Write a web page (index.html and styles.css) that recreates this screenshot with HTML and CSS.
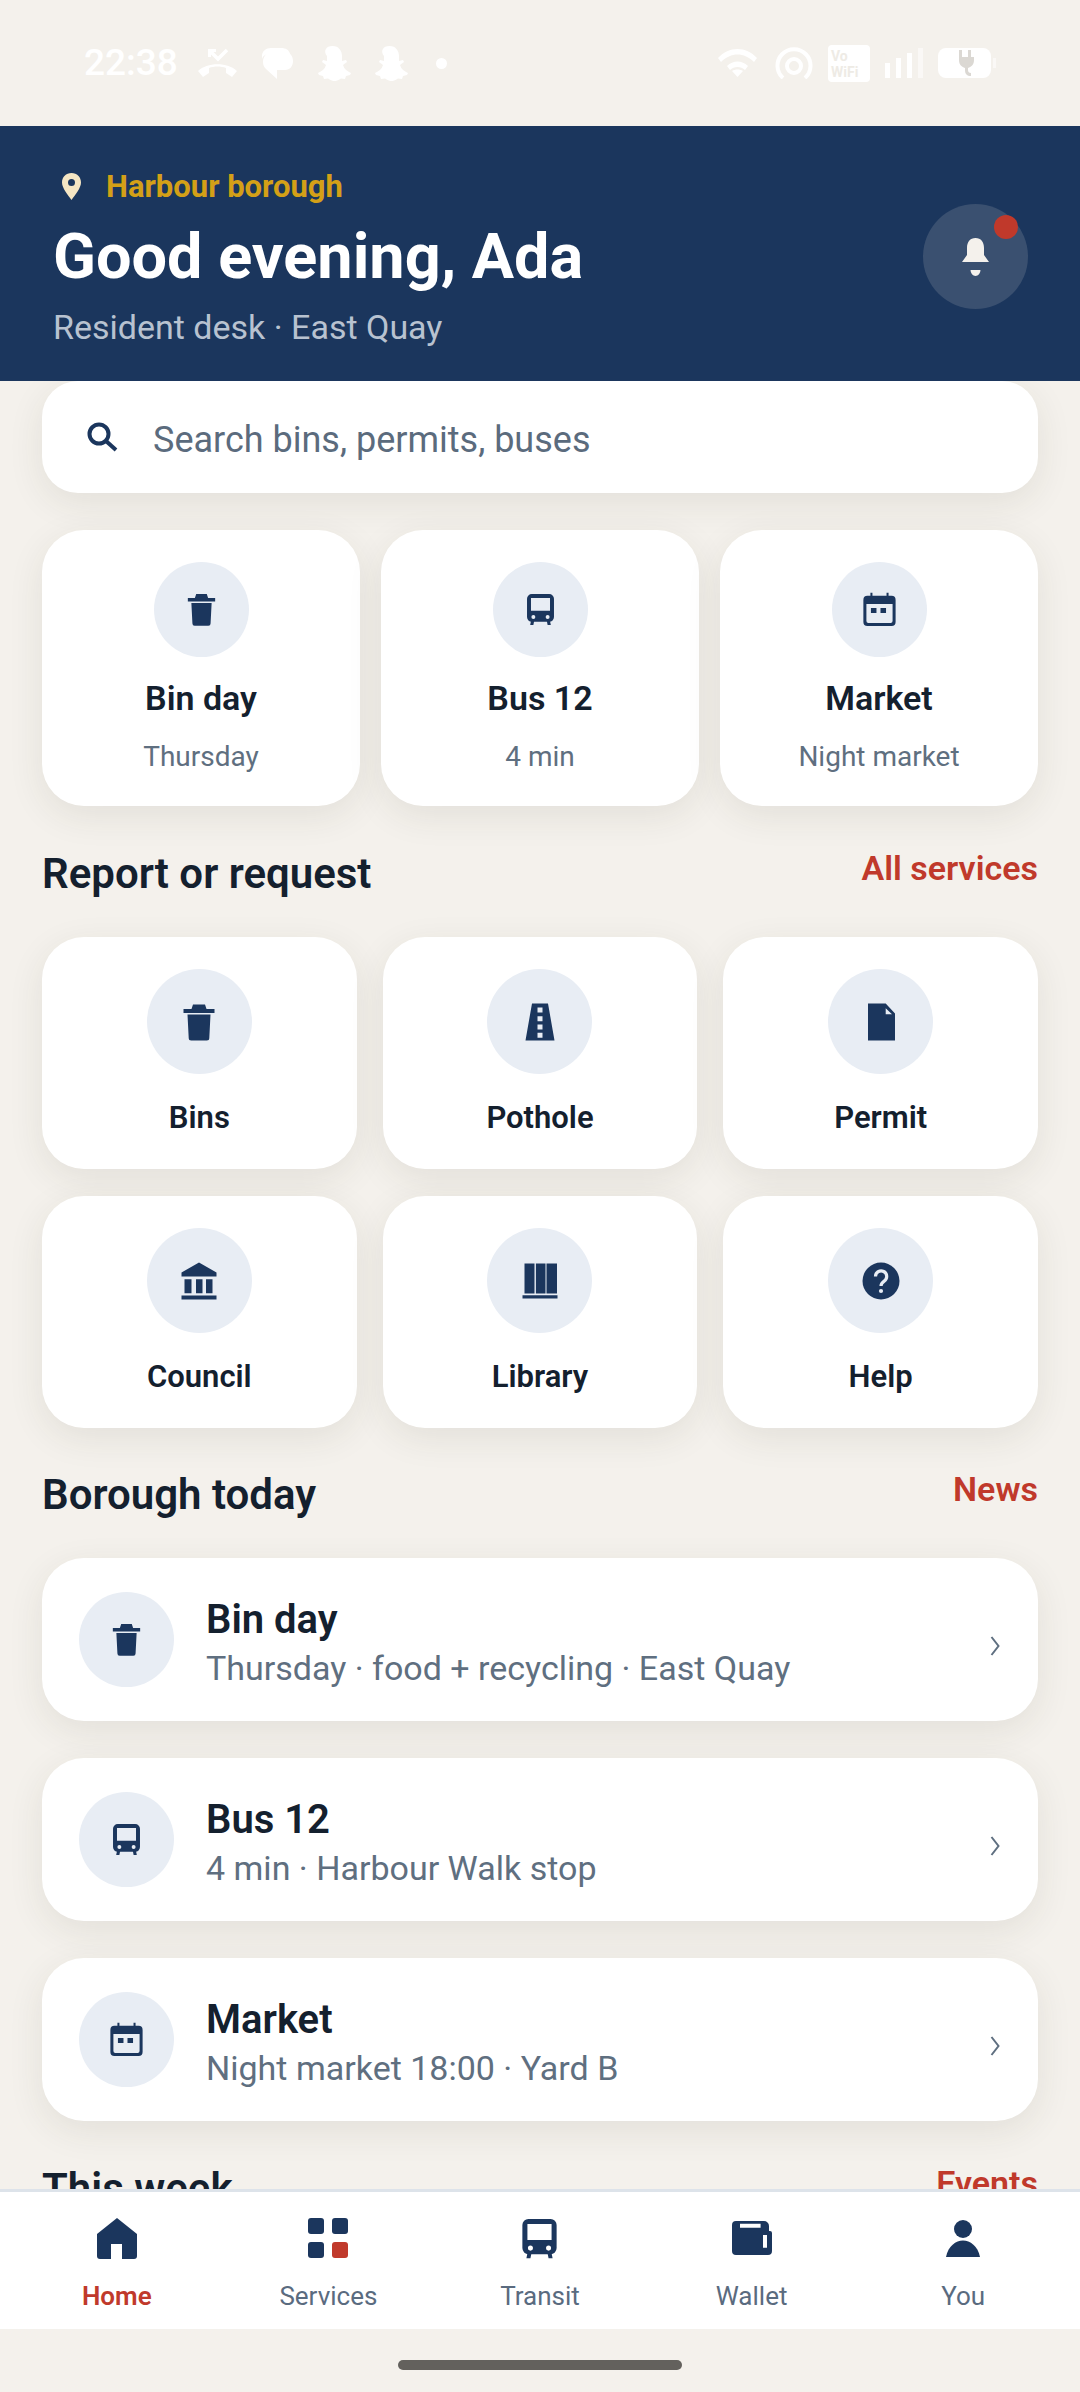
FILE: index.html
```html
<!DOCTYPE html>
<html lang="en">
<head>
  <meta charset="UTF-8" />
  <meta name="viewport" content="width=device-width, initial-scale=1.0"/>
  <title>Harbour borough</title>
  <link rel="stylesheet" href="styles.css">
</head>
<body>

<svg class="defs" aria-hidden="true">
  <defs>
    <g id="bin">
      <path d="M15 3.5h12l1.5 4.5h8v4h-31v-4h8z"/>
      <path d="M9.5 13.5h23l-1.2 23.5a2.5 2.5 0 0 1-2.5 2.5H13.2a2.5 2.5 0 0 1-2.5-2.5z"/>
    </g>
    <g id="bus" transform="translate(5.7 3.5) scale(.9)">
      <path fill-rule="evenodd" d="M6 0h22a6 6 0 0 1 6 6v23a6 6 0 0 1-6 6H6a6 6 0 0 1-6-6V6a6 6 0 0 1 6-6zM5 5v16h24V5zM8 26.5a2.5 2.5 0 1 0 0 5 2.5 2.5 0 0 0 0-5zM26 26.5a2.5 2.5 0 1 0 0 5 2.5 2.5 0 0 0 0-5z"/>
      <path d="M5 34h4l-1 5H4zM25 34h4l1 5h-4z"/>
    </g>
    <g id="calendar" transform="translate(2.7 2.1) scale(1.143)">
      <path fill-rule="evenodd" d="M7 0h2v3h14V0h2v3h3a4 4 0 0 1 4 4v22a4 4 0 0 1-4 4H4a4 4 0 0 1-4-4V7a4 4 0 0 1 4-4h3zM3 11v17a2 2 0 0 0 2 2h22a2 2 0 0 0 2-2V11zM7.5 15h5.5v5H7.5zM17 15h5.5v5H17z"/>
    </g>
    <path id="road" fill-rule="evenodd" transform="translate(6.5 2.5)" d="M6.5 0h16L29 37H0zM12 4v5h5V4zM12 12.700v5h5v-5zM12 21v5h5v-5zM12 29.300v5h5v-5z"/>
    <path id="doc" fill-rule="evenodd" transform="translate(8 2.500)" d="M0 0h17.700L27 10v27H0zM17.700 4.700v6h6.300z"/>
    <path id="bank" transform="translate(3.500 2.500)" d="M17.500 0L35 10v4H0v-4zM3 16.700h7v14H3zM14.500 16.700h6.500v14h-6.500zM24.500 16.700h6.500v14h-6.500zM0 33h35v4H0z"/>
    <path id="books" transform="translate(3.500 3.500)" d="M2 0h10v30H2zM13.400 0H23v30h-9.600zM24 0h10.500v30H24zM0 31.700h35V35H0z"/>
    <g id="help">
      <circle cx="21" cy="21" r="18.500"/>
      <path d="M15.500 16.500a5.600 5.600 0 1 1 8.700 4.600c-2 1.400-3.200 2.400-3.200 4.900" fill="none" stroke="#e8edf4" stroke-width="3.200"/>
      <circle cx="21" cy="31" r="2.100" fill="#e8edf4"/>
    </g>
    <path id="ghost" d="M18.500 0C25 0 28 5 28 10v5l4-1 1 2-4 3c1 4 4 6 8 8l-1 2-4 1-1 3-4-.5c-3 2-5 2.500-6.500 2.500s-3.500-.5-6.500-2.500l-4 .5-1-3-4-1-1-2c4-2 7-4 8-8l-4-3 1-2 4 1v-5C9 5 12 0 18.500 0z"/>
  </defs>
</svg>

<div class="phone">

  <div class="statusbar">
    <div class="status-left">
      <span class="time">22:38</span>
      <svg class="st" width="39" height="30" viewBox="0 0 39 30">
        <path d="M0 23c9-9 30-9 39 0l-5 6-6-4v-5c-5-2-12-2-17 0v5l-6 4z"/>
        <path d="M12 3l8 8 9-9" fill="none" stroke="#fff" stroke-width="3.500"/>
        <path d="M10 1h8v3h-5v5h-3z"/>
      </svg>
      <svg class="st ml3" width="34" height="31" viewBox="0 0 34 31">
        <path d="M2 8c0-5 4-8 9-8h10c5 0 8 2 9 6H10C6 6 2 8 2 12z"/>
        <path d="M13 4h12c5 0 8 4 8 9s-3 9-8 9h-8v9L6 21c-2-2-3-4-3-7 0-6 4-10 10-10z"/>
      </svg>
      <svg class="st" width="37" height="35" viewBox="0 0 37 35"><use href="#ghost"/></svg>
      <svg class="st" width="37" height="35" viewBox="0 0 37 35"><use href="#ghost"/></svg>
      <span class="st-dot"></span>
    </div>
    <div class="status-right">
      <svg class="st" width="39" height="28" viewBox="0 0 39 28">
        <path d="M0 9c11-12 28-12 39 0l-3 4C26 3 13 3 3 13z"/>
        <path d="M9 17c6-6 15-6 21 0l-3 4c-4-4-11-4-15 0z"/>
        <path d="M14 22c3-2 8-2 11 0l-5.500 6z"/>
      </svg>
      <svg class="st ml3" width="38" height="32" viewBox="0 0 38 32">
        <path d="M8 31A16.500 16.500 0 1 1 30 31" fill="none" stroke="#fff" stroke-width="4"/>
        <circle cx="19" cy="19" r="7" fill="none" stroke="#fff" stroke-width="4"/>
      </svg>
      <span class="vowifi">Vo<br>WiFi</span>
      <span class="signal">
        <i class="b1"></i><i class="b2"></i><i class="b3"></i><i class="b4"></i>
      </span>
      <span class="battery">
        <svg width="18" height="26" viewBox="0 0 18 26"><path fill="#dbd8d3" d="M3 0h3v7h6V0h3v7h3v3c0 5-3 7-6 8v2c0 2 1 3 3 3v3c-4 0-6-2-6-6v-2c-3-1-6-3-6-8V7h0z"/></svg>
      </span>
      <span class="battery-cap"></span>
    </div>
  </div>

  <header class="top">
    <div class="top-text">
      <div class="kicker">
        <svg width="19" height="27" viewBox="0 0 19 27"><path fill-rule="evenodd" fill="#f5e6c4" d="M9.500 0C15 0 19 4 19 9.500 19 15 13 22 9.500 27 6 22 0 15 0 9.500 0 4 4 0 9.500 0zM9.500 6a3.500 3.500 0 1 0 0 7 3.500 3.500 0 0 0 0-7z"/></svg>
        <span>Harbour borough</span>
      </div>
      <h1>Good evening, Ada</h1>
      <p>Resident desk · East Quay</p>
    </div>
    <div class="bell">
      <svg width="27" height="38" viewBox="0 0 27 38"><path d="M13.500 0C19 0 22 4 22 10v7l5 7H0l5-7v-7C5 4 8 0 13.500 0zM8.500 32h10a5 6 0 0 1-10 0z"/></svg>
      <span class="bell-dot"></span>
    </div>
  </header>

  <main class="content">

    <div class="search">
      <svg width="32" height="30" viewBox="0 0 32 30"><circle cx="12" cy="12" r="9.500" fill="none" stroke="#1b365d" stroke-width="4"/><path d="M19 19l10 9" stroke="#1b365d" stroke-width="4"/></svg>
      <span>Search bins, permits, buses</span>
    </div>

    <div class="quick">
      <div class="quick-card">
        <div class="circle small"><svg viewBox="0 0 42 42"><use href="#bin"/></svg></div>
        <b>Bin day</b>
        <span>Thursday</span>
      </div>
      <div class="quick-card">
        <div class="circle small"><svg viewBox="0 0 42 42"><use href="#bus"/></svg></div>
        <b>Bus 12</b>
        <span>4 min</span>
      </div>
      <div class="quick-card">
        <div class="circle small"><svg viewBox="0 0 42 42"><use href="#calendar"/></svg></div>
        <b>Market</b>
        <span>Night market</span>
      </div>
    </div>

    <div class="section-head">
      <h2>Report or request</h2>
      <a>All services</a>
    </div>

    <div class="services">
      <div class="tile"><div class="circle"><svg viewBox="0 0 42 42"><use href="#bin"/></svg></div><b>Bins</b></div>
      <div class="tile"><div class="circle"><svg viewBox="0 0 42 42"><use href="#road"/></svg></div><b>Pothole</b></div>
      <div class="tile"><div class="circle"><svg viewBox="0 0 42 42"><use href="#doc"/></svg></div><b>Permit</b></div>
      <div class="tile"><div class="circle"><svg viewBox="0 0 42 42"><use href="#bank"/></svg></div><b>Council</b></div>
      <div class="tile"><div class="circle"><svg viewBox="0 0 42 42"><use href="#books"/></svg></div><b>Library</b></div>
      <div class="tile"><div class="circle"><svg viewBox="0 0 42 42"><use href="#help"/></svg></div><b>Help</b></div>
    </div>

    <div class="section-head">
      <h2>Borough today</h2>
      <a>News</a>
    </div>

    <div class="list">
      <div class="row">
        <div class="circle small"><svg viewBox="0 0 42 42"><use href="#bin"/></svg></div>
        <div class="row-text"><b>Bin day</b><span>Thursday · food + recycling · East Quay</span></div>
        <svg class="chev" width="10" height="20" viewBox="0 0 10 20"><path d="M1.500 1l7 9-7 9" fill="none" stroke="#5f6f80" stroke-width="2"/></svg>
      </div>
      <div class="row">
        <div class="circle small"><svg viewBox="0 0 42 42"><use href="#bus"/></svg></div>
        <div class="row-text"><b>Bus 12</b><span>4 min · Harbour Walk stop</span></div>
        <svg class="chev" width="10" height="20" viewBox="0 0 10 20"><path d="M1.500 1l7 9-7 9" fill="none" stroke="#5f6f80" stroke-width="2"/></svg>
      </div>
      <div class="row">
        <div class="circle small"><svg viewBox="0 0 42 42"><use href="#calendar"/></svg></div>
        <div class="row-text"><b>Market</b><span>Night market 18:00 · Yard B</span></div>
        <svg class="chev" width="10" height="20" viewBox="0 0 10 20"><path d="M1.500 1l7 9-7 9" fill="none" stroke="#5f6f80" stroke-width="2"/></svg>
      </div>
    </div>

    <div class="section-head">
      <h2>This week</h2>
      <a>Events</a>
    </div>

  </main>

  <nav class="tabs">
    <div class="tab active">
      <div class="tab-icon"><svg width="40" height="41" viewBox="0 0 40 41"><path fill-rule="evenodd" d="M20 0l20 16v22a3 3 0 0 1-3 3H3a3 3 0 0 1-3-3V16zM14 26v15h11V26z"/></svg></div>
      <span>Home</span>
    </div>
    <div class="tab">
      <div class="tab-icon"><svg width="40" height="40" viewBox="0 0 40 40"><rect width="16" height="16" rx="3"/><rect x="24" width="16" height="16" rx="3"/><rect y="24" width="16" height="16" rx="3"/><rect x="24" y="24" width="16" height="16" rx="3" fill="#c0392b"/></svg></div>
      <span>Services</span>
    </div>
    <div class="tab">
      <div class="tab-icon"><svg width="47" height="47" viewBox="0 0 42 42"><use href="#bus"/></svg></div>
      <span>Transit</span>
    </div>
    <div class="tab">
      <div class="tab-icon"><svg width="40" height="34" viewBox="0 0 40 34"><path fill-rule="evenodd" d="M4 0h28a5 5 0 0 1 5 5v5h1a2 2 0 0 1 2 2v18a4 4 0 0 1-4 4H4a4 4 0 0 1-4-4V4a4 4 0 0 1 4-4zM8 2.700v4h20.600v-4zM31 14v12.700h4V14z"/></svg></div>
      <span>Wallet</span>
    </div>
    <div class="tab">
      <div class="tab-icon"><svg width="34" height="37" viewBox="0 0 34 37"><circle cx="17" cy="9" r="9"/><path d="M0 37C2 26 10 20.500 17 20.500S32 26 34 37z"/></svg></div>
      <span>You</span>
    </div>
  </nav>

  <div class="gesture"><span></span></div>

</div>

</body>
</html>
```

FILE: styles.css
```css
* {
  box-sizing: border-box;
}

body {
  margin: 0;
  font-family: Roboto, "Liberation Sans", sans-serif;
  background-color: #f4f1ec;
  color: #14202e;
}

.defs {
  display: block;
  width: 0;
  height: 0;
}

.phone {
  width: 1080px;
  height: 2392px;
  overflow: hidden;
  display: flex;
  flex-direction: column;
  background-color: #f4f1ec;
}

/* status bar */
.statusbar {
  height: 126px;
  flex: none;
  display: flex;
  justify-content: space-between;
  align-items: center;
  padding: 0 84px 0 84px;
  color: #fff;
}

.status-left,
.status-right {
  display: flex;
  align-items: center;
}

.status-left {
  gap: 20px;
}

.status-right {
  gap: 15px;
}

.st {
  fill: #fff;
}

.ml3 {
  margin-left: 3px;
}

.time {
  font-size: 37px;
  font-weight: 500;
  line-height: 44px;
}

.st-dot {
  width: 11px;
  height: 11px;
  margin-left: 8px;
  border-radius: 50%;
  background-color: #fff;
}

.vowifi {
  width: 42px;
  height: 37px;
  padding: 3px 0 0 3px;
  border-radius: 4px;
  background-color: #fff;
  color: #eeebe5;
  font-size: 14px;
  font-weight: 700;
  line-height: 16px;
}

.signal {
  display: flex;
  align-items: flex-end;
  gap: 6px;
  height: 30px;
}

.signal i {
  display: block;
  width: 5px;
  background-color: #fff;
}

.signal .b1 { height: 15px; }
.signal .b2 { height: 20px; }
.signal .b3 { height: 25px; }
.signal .b4 { height: 30px; opacity: .5; }

.battery {
  width: 53px;
  height: 30px;
  border-radius: 8px;
  background-color: #fff;
  display: flex;
  align-items: center;
  justify-content: center;
}

.battery-cap {
  width: 3px;
  height: 10px;
  margin-left: -13px;
  background-color: #fff;
  opacity: .5;
}

/* header */
.top {
  height: 255px;
  flex: none;
  display: flex;
  justify-content: space-between;
  padding: 0 52px 0 53px;
  background-color: #1b365d;
}

.top-text {
  padding-top: 40px;
}

.kicker {
  display: flex;
  align-items: center;
  gap: 25px;
  height: 40px;
  padding-left: 9px;
  color: #d4a017;
  font-size: 31px;
  font-weight: 700;
}

.top h1 {
  margin: 17px 0 0;
  color: #fff;
  font-size: 63px;
  font-weight: 700;
  line-height: 68px;
}

.top p {
  margin: 16px 0 0;
  color: #b8c2d0;
  font-size: 34px;
  line-height: 40px;
}

.bell {
  position: relative;
  width: 105px;
  height: 105px;
  margin-top: 78px;
  border-radius: 50%;
  background-color: #3a5070;
  display: flex;
  align-items: center;
  justify-content: center;
  fill: #f4f1ec;
}

.bell-dot {
  position: absolute;
  top: 11px;
  right: 10px;
  width: 24px;
  height: 24px;
  border-radius: 50%;
  background-color: #c0392b;
}

/* main scroll area */
.content {
  height: 1808px;
  flex: none;
  overflow: hidden;
  padding: 0 42px;
}

.search,
.quick-card,
.tile,
.row {
  background-color: #fff;
  box-shadow: 0 10px 36px rgba(60, 50, 30, 0.09);
}

.search {
  height: 112px;
  display: flex;
  align-items: center;
  gap: 34px;
  padding-left: 45px;
  border-radius: 36px;
  color: #5b6b7d;
  font-size: 36px;
}

.search span {
  padding-top: 5px;
}

.quick {
  display: grid;
  grid-template-columns: repeat(3, 1fr);
  gap: 21px;
  margin-top: 37px;
}

.quick-card {
  height: 276px;
  padding-top: 32px;
  border-radius: 42px;
  display: flex;
  flex-direction: column;
  align-items: center;
}

.quick-card b {
  margin-top: 21px;
  font-size: 34px;
  font-weight: 600;
  line-height: 40px;
}

.quick-card span {
  margin-top: 21px;
  color: #5f6f80;
  font-size: 28px;
  line-height: 36px;
}

.circle {
  width: 105px;
  height: 105px;
  flex: none;
  border-radius: 50%;
  background-color: #e8edf4;
  display: flex;
  align-items: center;
  justify-content: center;
  fill: #1b365d;
}

.circle svg {
  width: 42px;
  height: 42px;
}

.circle.small {
  width: 95px;
  height: 95px;
}

.circle.small svg {
  width: 37px;
  height: 37px;
}

.section-head {
  display: flex;
  justify-content: space-between;
  align-items: flex-start;
  margin: 44px 0 40px;
}

.section-head h2 {
  margin: 0;
  font-size: 42px;
  font-weight: 600;
  line-height: 47px;
}

.section-head a {
  color: #c0392b;
  font-size: 34px;
  font-weight: 600;
  line-height: 36px;
}

.services {
  display: grid;
  grid-template-columns: repeat(3, 1fr);
  column-gap: 26px;
  row-gap: 27px;
  margin-bottom: -1px;
}

.tile {
  height: 232px;
  padding-top: 32px;
  border-radius: 42px;
  display: flex;
  flex-direction: column;
  align-items: center;
}

.tile b {
  margin-top: 25px;
  font-size: 31px;
  font-weight: 600;
  line-height: 38px;
}

.list {
  display: flex;
  flex-direction: column;
  gap: 37px;
}

.row {
  height: 163px;
  padding: 0 37px;
  border-radius: 42px;
  display: flex;
  align-items: center;
}

.row-text {
  flex: 1;
  padding: 9px 0 0 32px;
  display: flex;
  flex-direction: column;
}

.row-text b {
  font-size: 40px;
  font-weight: 600;
  line-height: 44px;
  margin-top: -2px;
}

.row-text span {
  margin-top: 6px;
  color: #5f6f80;
  font-size: 34px;
  line-height: 40px;
}

.chev {
  margin: 13px 1px 0 0;
}

/* bottom nav */
.tabs {
  height: 140px;
  flex: none;
  display: flex;
  padding: 25px 11px 0;
  border-top: 3px solid #dde3ea;
  background-color: #fff;
}

.tab {
  flex: 1;
  display: flex;
  flex-direction: column;
  align-items: center;
  color: #5a6b7f;
  font-size: 26px;
  line-height: 32px;
}

.tab span {
  margin-top: 21px;
}

.tab.active {
  color: #c0392b;
  font-weight: 600;
}

.tab-icon {
  height: 42px;
  display: flex;
  align-items: center;
  justify-content: center;
  fill: #1b365d;
}

.gesture {
  flex: 1;
  display: flex;
  justify-content: center;
  padding-top: 31px;
}

.gesture span {
  width: 284px;
  height: 10px;
  border-radius: 5px;
  background-color: #63615d;
}
```
